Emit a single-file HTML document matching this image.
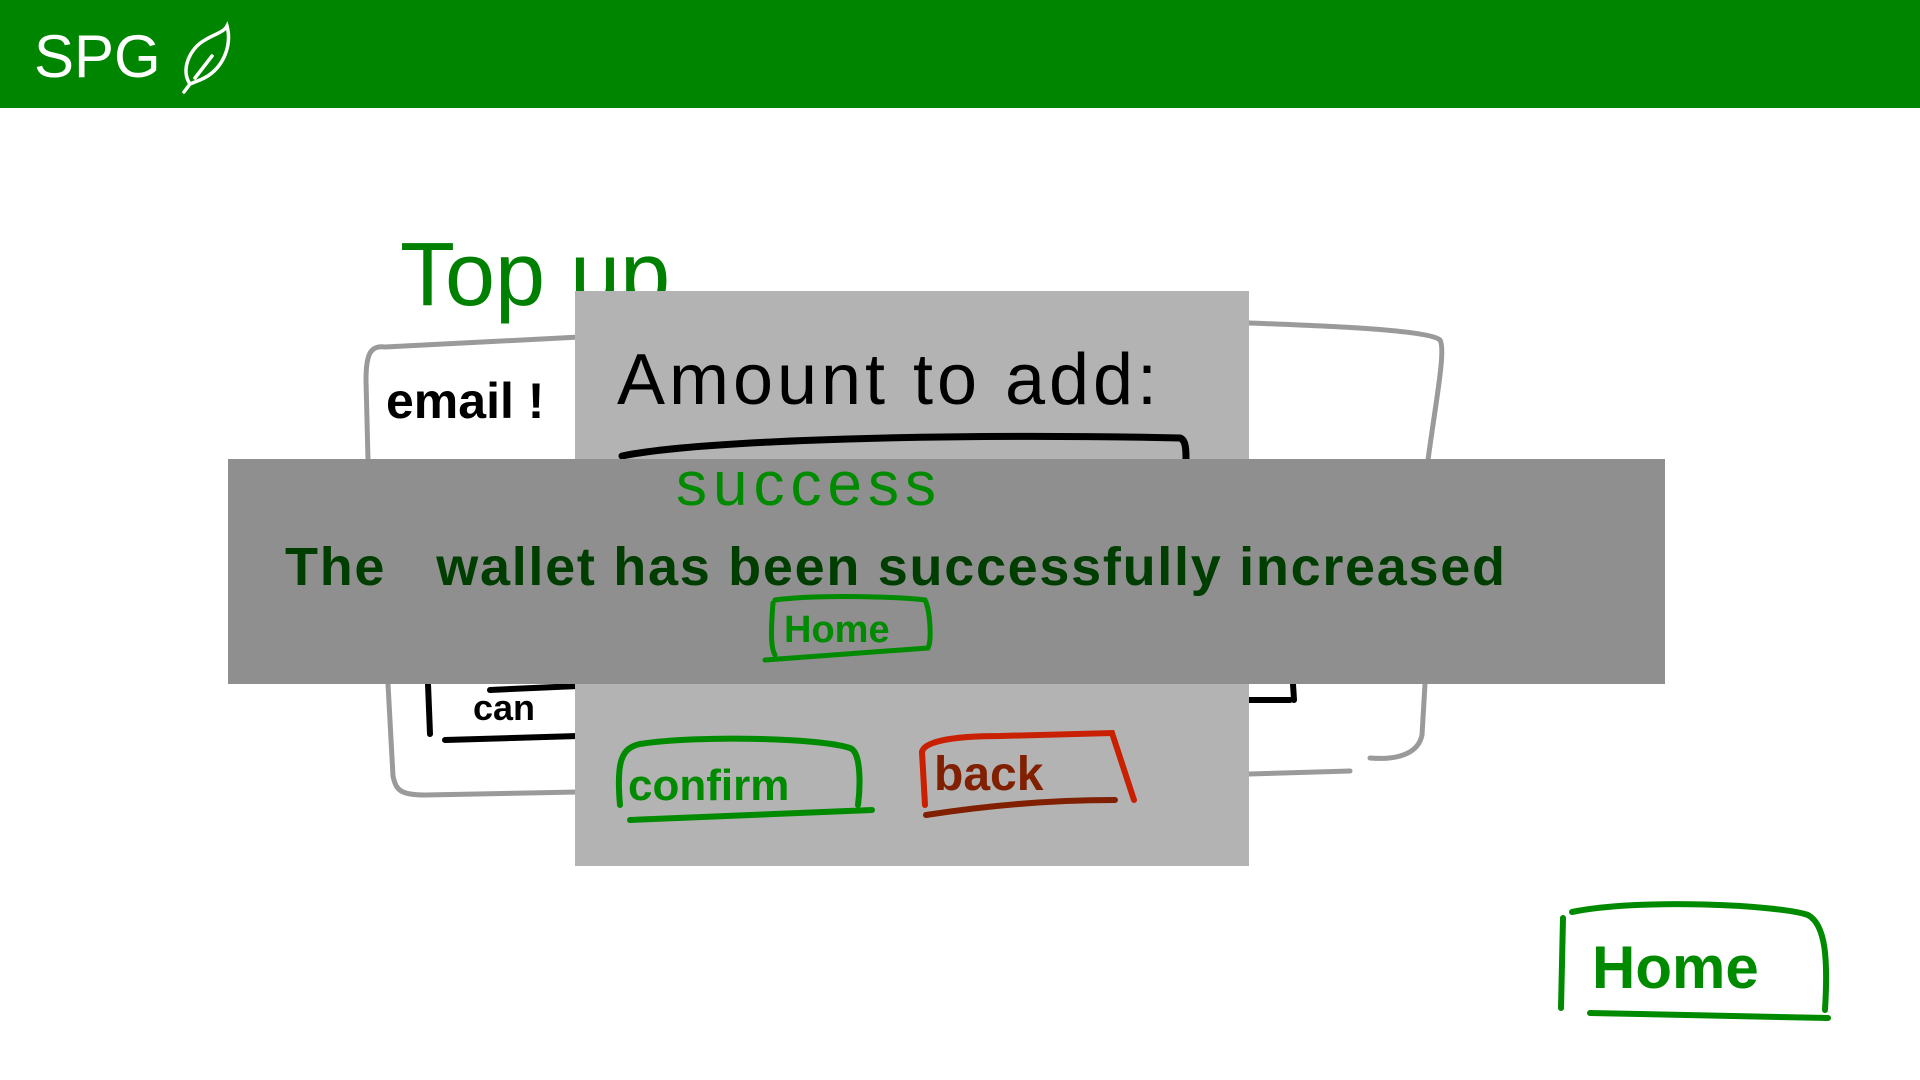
<!DOCTYPE html>
<html><head><meta charset="utf-8"><style>
html,body{margin:0;padding:0;width:1920px;height:1080px;overflow:hidden;background:#fff;font-family:"Liberation Sans",sans-serif}
.hdr{position:absolute;left:0;top:0;width:1920px;height:108px;background:#008500}
.logo{position:absolute;left:34px;top:27px;color:#fff;font-size:60px;line-height:60px}
svg{position:absolute;left:0;top:0}
</style></head><body>
<div class="hdr"><div class="logo">SPG</div>
<svg width="260" height="108" viewBox="0 0 260 108" style="left:0;top:0"><path d="M184 92 L190 84 C180 70 190 48 205 40 C215 34 224 32 227 26 C232 45 224 70 200 80 C195 82 190 84 190 84 M195 78 L212 56" fill="none" stroke="#fff" stroke-width="3.5" stroke-linecap="round"/></svg>
</div>
<svg width="1920" height="1080" viewBox="0 0 1920 1080">
<g fill="none" stroke="#9a9a9a" stroke-width="5" stroke-linecap="round">
<path d="M385 347 C370 345 366 355 366 380 L368 460"/>
<path d="M385 347 L580 337"/>
<path d="M1249 323 C1330 326 1430 330 1440 340 C1446 350 1436 400 1428 460"/>
<path d="M388 684 L393 776 C396 790 400 795 425 795 L578 792"/>
<path d="M1249 774 L1350 771"/>
<path d="M1425 684 L1422 735 C1418 755 1395 760 1370 758"/>
</g>
<g fill="none" stroke="#000" stroke-width="6" stroke-linecap="round">
<path d="M428 684 L430 734"/><path d="M445 740 L578 736"/><path d="M490 690 L578 686"/>
<path d="M1248 700 L1290 700 M1293 684 L1294 700"/>
</g>
<text x="386" y="418" font-size="50" fill="#000" font-weight="bold">email !</text>
<text x="473" y="720" font-size="36" fill="#000" font-weight="bold">can</text>
<text x="400" y="305" font-size="90" fill="#008000">Top up</text>
<rect x="575" y="291" width="674" height="575" fill="#b3b3b3"/>
<text x="617" y="404" font-size="72" fill="#000" textLength="540">Amount to add:</text>
<path d="M622 456 C700 440 950 433 1180 438 C1186 440 1186 450 1186 460" fill="none" stroke="#000" stroke-width="7" stroke-linecap="round"/>
<rect x="228" y="459" width="1437" height="225" fill="#8f8f8f"/>
<text x="676" y="505" font-size="62" fill="#008a00" letter-spacing="6">success</text>
<text x="285" y="585" font-size="54" fill="#003d00" font-weight="bold" textLength="1220">The&#160;&#160;&#160;wallet has been successfully increased</text>
<path d="M773 603 C770 640 772 650 775 655 M775 600 C820 594 900 597 925 600 C930 610 932 640 928 648 L765 660" fill="none" stroke="#008a00" stroke-width="5" stroke-linecap="round"/>
<text x="784" y="642" font-size="38" fill="#008a00" font-weight="bold">Home</text>
<path d="M620 805 C616 760 622 748 640 744 C700 735 820 738 850 748 C862 752 860 790 858 805 M630 820 L872 810" fill="none" stroke="#008a00" stroke-width="6" stroke-linecap="round"/>
<text x="628" y="800" font-size="44" fill="#008a00" font-weight="bold">confirm</text>
<path d="M925 805 L922 752 C924 740 960 736 1000 736 L1112 733 L1134 800" fill="none" stroke="#c82000" stroke-width="6" stroke-linecap="round"/>
<path d="M926 815 C990 805 1050 800 1115 800" fill="none" stroke="#802000" stroke-width="6" stroke-linecap="round"/>
<text x="934" y="790" font-size="48" fill="#802000" font-weight="bold">back</text>
<path d="M1563 918 L1561 1008 M1572 912 C1640 898 1780 905 1808 915 C1826 925 1828 960 1825 1010 M1590 1013 L1828 1018" fill="none" stroke="#008a00" stroke-width="6" stroke-linecap="round"/>
<text x="1592" y="988" font-size="60" fill="#008a00" font-weight="bold">Home</text>
</svg>
</body></html>
